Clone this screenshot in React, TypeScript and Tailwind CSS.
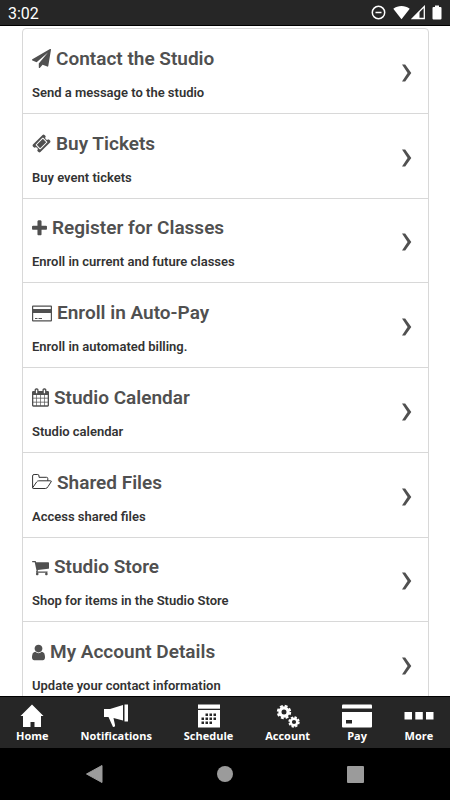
import type { ReactNode } from "react";

type Glyph = { box: string; size: string; d: string; outline?: boolean };

const glyphs: Record<string, Glyph> = {
  plane: {
    box: "0 0 1792 1792",
    size: "w-[19px]",
    d: "M1764 11q33 24 27 64l-256 1536q-5 29-32 45-14 8-31 8-11 0-24-5l-453-185-242 295q-18 23-49 23-13 0-22-4-19-7-30.5-23.5t-11.5-36.5v-349l864-1059-1069 925-395-162q-37-14-40-55-2-40 32-59l1664-960q15-9 32-9 20 0 36 11z",
  },
  ticket: {
    box: "0 0 1792 1792",
    size: "w-[19px]",
    d: "M1024 452l316 316-572 572-316-316zm-211 979l618-618q19-19 19-45t-19-45l-362-362q-18-18-45-18t-45 18l-618 618q-19 19-19 45t19 45l362 362q18 18 45 18t45-18zm889-637l-907 908q-37 37-90.5 37t-90.5-37l-126-126q56-56 56-136t-56-136-136-56-136 56l-125-126q-37-37-37-90.5t37-90.5l907-906q37-37 90.5-37t90.5 37l125 125q-56 56-56 136t56 136 136 56 136-56l126 125q37 37 37 90.5t-37 90.5z",
  },
  plus: {
    box: "192 0 1408 1792",
    size: "w-[15px]",
    d: "M1600 736v192q0 40-28 68t-68 28h-416v416q0 40-28 68t-68 28h-192q-40 0-68-28t-28-68v-416h-416q-40 0-68-28t-28-68v-192q0-40 28-68t68-28h416v-416q0-40 28-68t68-28h192q40 0 68 28t28 68v416h416q40 0 68 28t28 68z",
  },
  card: {
    box: "0 0 20 19",
    size: "w-5",
    d: "M1 1.500h18q1 0 1 1v14q0 1-1 1H1q-1 0-1-1v-14q0-1 1-1zM1.200 2.700v2.300h17.600V2.700zM1.200 9v7.300h17.600V9zM3 14h2.500v1H3zM6.500 14H10v1H6.500z",
  },
  calendar: {
    box: "64 0 1664 1792",
    size: "w-[17px]",
    d: "M192 1664h288v-288h-288v288zm352 0h320v-288h-320v288zm-352-352h288v-320h-288v320zm352 0h320v-320h-320v320zm-352-384h288v-288h-288v288zm736 736h320v-288h-320v288zm-384-736h320v-288h-320v288zm768 736h288v-288h-288v288zm-384-352h320v-320h-320v320zm-352-864v-288q0-13-9.5-22.5t-22.5-9.5h-64q-13 0-22.5 9.5t-9.5 22.5v288q0 13 9.5 22.5t22.5 9.5h64q13 0 22.5-9.5t9.5-22.5zm736 864h288v-320h-288v320zm-384-384h320v-288h-320v288zm384 0h288v-288h-288v288zm32-480v-288q0-13-9.5-22.5t-22.5-9.5h-64q-13 0-22.5 9.5t-9.5 22.5v288q0 13 9.5 22.5t22.5 9.5h64q13 0 22.5-9.5t9.5-22.5zm384-64v1280q0 52-38 90t-90 38h-1408q-52 0-90-38t-38-90v-1280q0-52 38-90t90-38h128v-96q0-66 47-113t113-47h64q66 0 113 47t47 113v96h384v-96q0-66 47-113t113-47h64q66 0 113 47t47 113v96h128q52 0 90 38t38 90z",
  },
  folder: {
    box: "0 0 20 19",
    size: "w-5",
    outline: true,
    d: "M.6 14.800V3q0-1.500 1.500-1.500h3.600Q7 1.500 7 3v1.300h7.500q1.300 0 1.300 1.300v2.200M.6 14.800l4-5.800q.8-1.200 2.200-1.200h11.600q1.500 0 .6 1.200l-3 4.600q-.9 1.900-2.600 1.900H1.200q-.6 0-.6-.7z",
  },
  cart: {
    box: "64 0 1664 1792",
    size: "w-[17px]",
    d: "M704 1536q0 52-38 90t-90 38-90-38-38-90 38-90 90-38 90 38 38 90zm896 0q0 52-38 90t-90 38-90-38-38-90 38-90 90-38 90 38 38 90zm128-1088v512q0 24-16.5 42.5t-40.5 21.5l-1044 122q13 60 13 70 0 16-24 64h920q26 0 45 19t19 45-19 45-45 19h-1024q-26 0-45-19t-19-45q0-11 8-31.5t16-36 21.5-40 15.5-29.5l-177-823h-204q-26 0-45-19t-19-45 19-45 45-19h256q16 0 28.5 6.5t19.5 15.5 13 24.5 8 26 5.5 29.5 4.5 26h1201q26 0 45 19t19 45z",
  },
  user: {
    box: "256 0 1280 1792",
    size: "w-[13px]",
    d: "M1536 1399q0 109-62.5 187t-150.5 78h-854q-88 0-150.5-78t-62.5-187q0-85 8.5-160.5t31.5-152 58.5-131 94-89 134.5-34.5q131 128 313 128t313-128q76 0 134.5 34.5t94 89 58.5 131 31.5 152 8.5 160.5zm-256-887q0 159-112.5 271.5t-271.5 112.5-271.5-112.5-112.5-271.5 112.5-271.5 271.5-112.5 271.5 112.5 112.5 271.5z",
  },
};

const items = [
  { icon: "plane", title: "Contact the Studio", text: "Send a message to the studio" },
  { icon: "ticket", title: "Buy Tickets", text: "Buy event tickets" },
  { icon: "plus", title: "Register for Classes", text: "Enroll in current and future classes" },
  { icon: "card", title: "Enroll in Auto-Pay", text: "Enroll in automated billing." },
  { icon: "calendar", title: "Studio Calendar", text: "Studio calendar" },
  { icon: "folder", title: "Shared Files", text: "Access shared files" },
  { icon: "cart", title: "Studio Store", text: "Shop for items in the Studio Store" },
  { icon: "user", title: "My Account Details", text: "Update your contact information" },
];

function StatusBar() {
  return (
    <header className="flex h-[26px] shrink-0 items-center justify-between border-b border-black bg-[#262626] px-2 text-white">
      <span className="pt-0.5 text-base leading-6">3:02</span>
      <div className="flex items-center">
        <svg className="mr-[7px] size-[15px]" viewBox="0 0 15 15" fill="none" stroke="currentColor" strokeWidth="1.5">
          <circle cx="7.5" cy="7.5" r="6.2" />
          <path d="M4.5 7.5h6" />
        </svg>
        <svg className="h-[15px] w-[17px]" viewBox="0 0 17 15" fill="currentColor">
          <path d="M.3 3.8C5 0 12 0 16.700 3.800L8.500 14.300z" />
        </svg>
        <svg className="mr-[7px] ml-px h-[15px] w-3.5" viewBox="0 0 14 15" fill="none" stroke="currentColor">
          <path d="M13.300 1.500v12H1.300z" strokeWidth="1.300" />
          <path d="M8.500 6v7.500H1.300z" fill="currentColor" stroke="none" />
        </svg>
        <svg className="h-[15px] w-[10px]" viewBox="0 0 10 15" fill="currentColor">
          <path d="M3 .5h4V2h1.500q1 0 1 1v10.500q0 1-1 1h-7q-1 0-1-1V3q0-1 1-1H3z" />
        </svg>
      </div>
    </header>
  );
}

function MenuRow({ icon, title, text }: { icon: string; title: string; text: string }) {
  const g = glyphs[icon];
  return (
    <li className="border-b border-[#d8d8d8]">
      <a href="#" className="flex h-full items-center justify-between pt-1 pr-4 pl-[9px]">
        <div className="pt-1">
          <h2 className="flex items-center gap-[5px] text-[19px] leading-6 font-semibold text-[#505050]">
            <svg
              className={`h-[19px] ${g.size}`}
              viewBox={g.box}
              fill={g.outline ? "none" : "currentColor"}
              stroke={g.outline ? "#333" : "none"}
              fillRule="evenodd"
            >
              <path d={g.d} />
            </svg>
            {title}
          </h2>
          <p className="mt-3 text-[13px] leading-5 font-semibold text-[#333]">{text}</p>
        </div>
        <svg className="h-[18px] w-[11px]" viewBox="0 0 11 18" fill="#505050">
          <path d="M1 .5h3.200L10.300 9 4.200 17.500H1L6.600 9z" />
        </svg>
      </a>
    </li>
  );
}

function Tab({ label, children }: { label: string; children: ReactNode }) {
  return (
    <button type="button" className="flex flex-col items-center">
      <span className="flex h-6 items-center">{children}</span>
      <span className="text-[11px] leading-4 font-bold">{label}</span>
    </button>
  );
}

function TabBar() {
  return (
    <nav className="flex h-[52px] shrink-0 items-start justify-between border-t border-black bg-[#262626] px-4 pt-[7px] font-['Open_Sans',sans-serif] text-white">
      <Tab label="Home">
        <svg className="h-6 w-6" viewBox="0 0 24 24" fill="currentColor">
          <path d="M12 .5L23.500 12H21v11h-6.500v-5h-4v5H3V12H.5z" />
        </svg>
      </Tab>
      <Tab label="Notifications">
        <svg className="h-6 w-[26px]" viewBox="0 0 26 24" fill="currentColor">
          <path d="M1 5h6L20 1v15.500L10.500 14l1.600 7.500q0 1.500-2.100 1.500L5.500 13H1z" />
          <path d="M21.500.5H25v17h-3.500z" />
        </svg>
      </Tab>
      <Tab label="Schedule">
        <svg className="h-6 w-[22px]" viewBox="0 0 22 24" fill="currentColor">
          <path d="M0 .5h22v4.200H0z" />
          <path
            fillRule="evenodd"
            d="M0 6h22v17.500H0zM7.500 9.500v2.500H10V9.500zM11.500 9.500v2.500H14V9.500zM15.500 9.500v2.500H18V9.500zM3.500 13.500V16H6v-2.500zM7.500 13.500V16H10v-2.500zM11.500 13.500V16H14v-2.500zM15.500 13.500V16H18v-2.500zM3.500 17.500V20H6v-2.500zM7.500 17.500V20H10v-2.500zM11.500 17.500V20H14v-2.500z"
          />
        </svg>
      </Tab>
      <Tab label="Account">
        <svg className="h-6 w-6" viewBox="0 0 24 24" fill="none" stroke="currentColor">
          <circle cx="8" cy="8" r="4.100" strokeWidth="3.200" />
          <circle cx="8" cy="8" r="6.200" strokeWidth="2" strokeDasharray="2.900 1.970" />
          <circle cx="18" cy="18" r="3.300" strokeWidth="2.400" />
          <circle cx="18" cy="18" r="4.900" strokeWidth="1.600" strokeDasharray="2.300 1.548" />
        </svg>
      </Tab>
      <Tab label="Pay">
        <svg className="h-6 w-[30px]" viewBox="0 0 30 24" fill="currentColor">
          <path d="M0 4.500V1.500q0-1 1-1h28q1 0 1 1v3z" />
          <path fillRule="evenodd" d="M0 8h30v14.500q0 1-1 1H1q-1 0-1-1zM4 16v3.500h6V16z" />
        </svg>
      </Tab>
      <Tab label="More">
        <svg className="h-6 w-[30px]" viewBox="0 0 30 24" fill="currentColor">
          <path d="M.5 8H8v7.500H.5zM11.300 8h7.500v7.500h-7.500zM22 8h7.500v7.500H22z" />
        </svg>
      </Tab>
    </nav>
  );
}

function SystemBar() {
  return (
    <footer className="grid h-[52px] shrink-0 grid-cols-3 place-items-center bg-black px-[30px] text-[#9b9b9b]">
      <button type="button" aria-label="Back">
        <svg className="size-[18px]" viewBox="0 0 18 18" fill="currentColor">
          <path d="M16 .5v17L.5 9z" stroke="currentColor" strokeLinejoin="round" />
        </svg>
      </button>
      <button type="button" aria-label="Home" className="size-4 rounded-full bg-[#9b9b9b]" />
      <button type="button" aria-label="Recent apps" className="size-[17px] rounded-[1px] bg-[#9b9b9b]" />
    </footer>
  );
}

export default function App() {
  return (
    <div className="flex h-screen flex-col bg-white font-[Roboto,sans-serif]">
      <StatusBar />
      <main className="min-h-0 flex-1 overflow-hidden pt-0.5 pr-[21px] pl-[22px]">
        <ul className="grid min-h-[680px] auto-rows-fr rounded-[4px] border border-[#d8d8d8]">
          {items.map((item) => (
            <MenuRow key={item.title} {...item} />
          ))}
        </ul>
      </main>
      <TabBar />
      <SystemBar />
    </div>
  );
}
